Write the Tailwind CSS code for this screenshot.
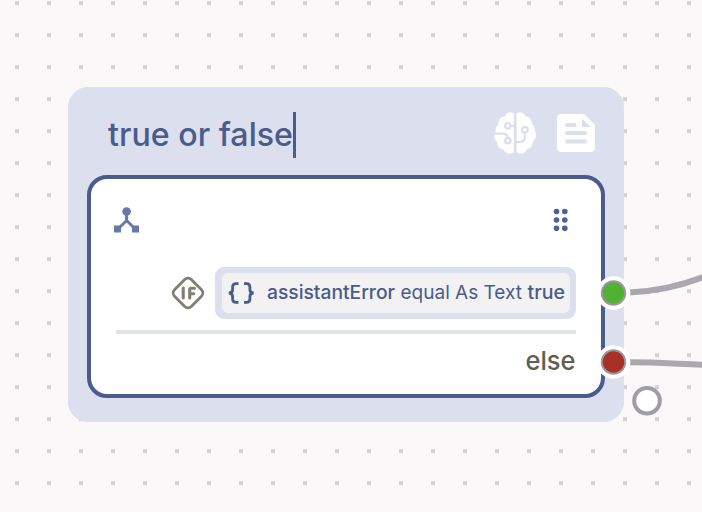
<!DOCTYPE html>
<html lang="en"><head><meta charset="utf-8"><title>Condition node</title>
<script src="https://cdn.jsdelivr.net/npm/@tailwindcss/browser@4"></script></head>
<body class="relative h-[512px] w-[702px] overflow-hidden bg-[#faf8f9] font-['Inter',sans-serif] text-[#4a5b8c]">
<svg class="absolute inset-0" width="702" height="512">
<defs><pattern id="dots" width="32" height="32" patternUnits="userSpaceOnUse"><rect x="15" y="1.2" width="4" height="4" fill="#d3d2d3"/></pattern></defs>
<rect width="702" height="512" fill="url(#dots)"/>
</svg>
<main class="absolute left-[68px] top-[87px] flex h-[334.5px] w-[556px] flex-col rounded-[20px] border border-[#dee1ea] bg-[#dcdfed] px-[18px]">
<header class="flex h-[87px] shrink-0 items-center pl-[21px] pr-[10px]">
<div class="mt-[6px] flex h-[46px] w-[188px] items-center border-r-3 border-[#4a5b8c]"><svg class="overflow-visible" width="185" height="46"><text x="0" y="34" font-size="32.5" font-weight="500" textLength="185" lengthAdjust="spacingAndGlyphs" fill="#4a5b8c">true or false</text></svg></div>
<div class="ml-auto mt-[3px] flex items-center gap-[21px]">
<svg width="42" height="42" viewBox="0 0 42 42" fill="none">
<path d="M19.8 1.2C16.5-1 11.8 1 11.2 4.6 7.3 4.6 4 7.8 4.6 12.2 2.6 13.7 1.2 16.4 1.5 19.6L0 23c0 3 1 5 3.2 6.8C2.8 34 6 37.2 9.4 37.4c1.8 4.4 7 5.6 10.4 2.6Z" fill="white"/>
<path d="M22.6 1.2c3.3-2.2 8-.4 8.8 3.2 4 .2 7 3.6 6.5 7.8 2 1.5 3.2 3.4 3 6.2 1.8 4 1.6 8-2.2 11.2.3 4-2.4 7.2-6 7.6-1.8 4.6-6.8 5.8-10.1 2.8Z" fill="white"/>
<g stroke="#dcdfed" stroke-width="2.2"><circle cx="13.8" cy="13.8" r="2.8"/><path d="M16.6 13.8h4"/><circle cx="13.8" cy="28.6" r="2.8"/><path d="M0 21.6h8.5c3.5 0 5.3 1.2 5.3 4.4"/><circle cx="30.8" cy="17.8" r="2.9"/><path d="M30.8 20.7v4.3c0 3.6-2 5.2-5.2 5.2H22"/></g>
</svg>
<svg width="38" height="38" viewBox="0 0 38 38"><path d="M4.5 0H27L38 11v22.5c0 2.8-1.7 4.5-4.5 4.5h-29C1.7 38 0 36.3 0 33.5v-29C0 1.7 1.7 0 4.5 0Z" fill="white"/><path d="M25 4.5V13h8.6ZM8.5 9H19v4H8.5ZM8.5 17h21v4h-21ZM8.5 25.5h21v4h-21Z" fill="#dcdfed"/></svg>
</div>
</header>
<section class="flex h-[223px] shrink-0 flex-col rounded-[20px] border-4 border-[#4a5b8c] bg-white pl-[23px] pr-[25px]">
<div class="flex h-[82px] items-center justify-between pr-[8px]">
<svg width="25" height="26" viewBox="0 0 25 26" fill="#6679a7"><circle cx="12.6" cy="4.5" r="4.3"/><path d="M0 18.5h7v7H0ZM18 18.5h7v7h-7Z"/><path d="M12.6 7v7M4.5 21.5l8.1-8 8.1 8" fill="none" stroke="#6679a7" stroke-width="3"/></svg>
<svg width="15" height="24" viewBox="0 0 15 24" fill="#4d6197"><circle cx="3.5" cy="3.5" r="2.8"/><circle cx="11.8" cy="3.5" r="2.8"/><circle cx="3.5" cy="12" r="2.8"/><circle cx="11.8" cy="12" r="2.8"/><circle cx="3.5" cy="20.3" r="2.8"/><circle cx="11.8" cy="20.3" r="2.8"/></svg>
</div>
<div class="mt-[6px] flex h-[52px] items-center justify-end gap-[10px]">
<svg width="34" height="34" viewBox="0 0 34 34" fill="none" stroke="#827f72"><rect x="5.1" y="5.1" width="23.8" height="23.8" rx="5" transform="rotate(45 17 17)" stroke-width="2.8"/><path d="M12.2 12v10M18.7 22v-8.2q0-1.5 1.5-1.5h3.2M18.7 17.8h4" stroke-width="3.1" stroke-linecap="round"/></svg>
<div class="flex h-[52px] w-[361px] items-center rounded-[9px] bg-[#dcdfed] pl-[6.5px]">
<div class="flex h-10 w-[348px] items-center rounded-md bg-[#f2f2f2] pl-[6px]">
<svg width="27" height="22" viewBox="0 0 27 22" fill="none" stroke="#4a5b8c" stroke-width="2.8"><path d="M10.5 1.7H8C5.6 1.7 4.6 2.8 4.6 5v2.5C4.6 9.5 3.4 11 .8 11c2.6 0 3.8 1.5 3.8 3.5V17c0 2.2 1 3.3 3.4 3.3h2.5M16 1.7h2.5c2.4 0 3.4 1.1 3.4 3.3v2.5c0 2 1.2 3.5 3.8 3.5-2.6 0-3.8 1.5-3.8 3.5V17c0 2.2-1 3.3-3.4 3.3H16"/></svg>
<svg class="ml-[12px]" width="300" height="40" fill="#4a5b8c" font-size="19"><text x="0" y="26" font-weight="500" textLength="128" lengthAdjust="spacingAndGlyphs">assistantError</text><text x="133.5" y="26" font-weight="400" textLength="121.5" lengthAdjust="spacingAndGlyphs">equal As Text</text><text x="260.5" y="26" font-weight="500" textLength="37.5" lengthAdjust="spacingAndGlyphs">true</text></svg>
</div></div>
</div>
<div class="ml-[2px] mt-[11px] h-1 shrink-0 bg-[#e0e2ea]"></div>
<div class="flex justify-end"><svg width="52" height="50"><text x="1.5" y="36.3" font-size="26" font-weight="500" textLength="50" lengthAdjust="spacingAndGlyphs" fill="#615e50">else</text></svg></div>
</section>
</main>
<svg class="absolute inset-0" width="702" height="512" fill="none">
<path d="M629 292.5C656 291.5 680 286.5 706 276M629 362.2C656 362.2 680 364 706 364.8" stroke="#a9a8ae" stroke-width="6"/>
<circle cx="613.5" cy="293" r="16.8" fill="white"/><circle cx="613.5" cy="293" r="11.7" fill="#50b232" stroke="#9b989d" stroke-width="2"/>
<circle cx="613.5" cy="362" r="16.8" fill="white"/><circle cx="613.5" cy="362" r="11.7" fill="#a83026" stroke="#9b989d" stroke-width="2"/>
<circle cx="647" cy="400.7" r="12.8" fill="white" stroke="#9e9ea4" stroke-width="4"/>
</svg>
</body></html>
